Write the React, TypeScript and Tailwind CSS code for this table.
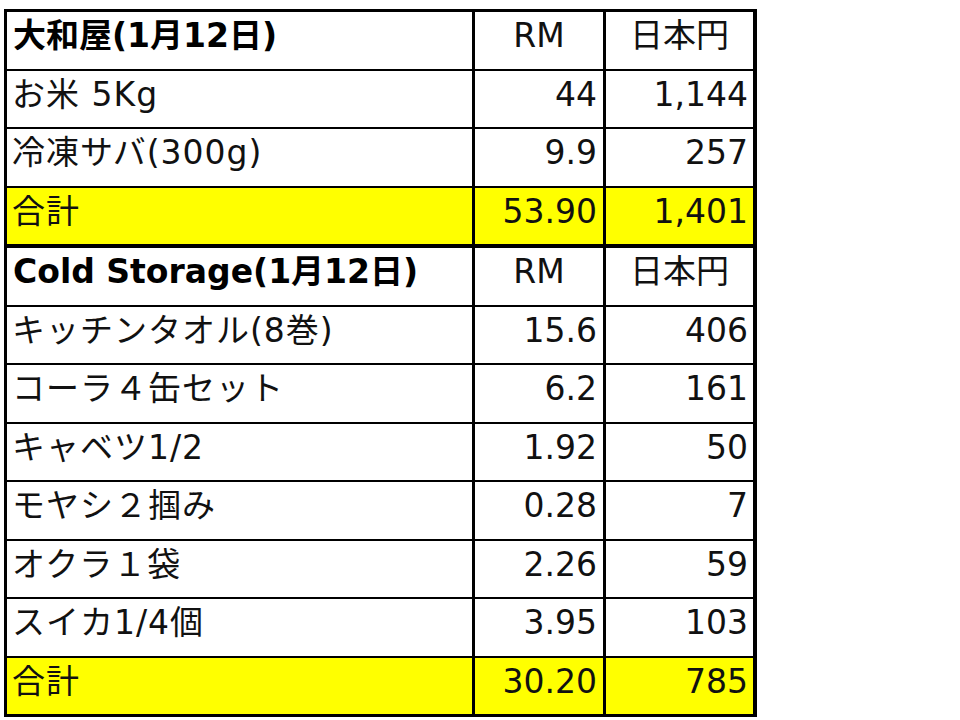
const FONT = { fontFamily: '"DejaVu Sans", "Noto Sans CJK JP", sans-serif' }

type Row = { label: string; rm: string; yen: string; kind?: 'head' | 'total' }

const rows: Row[] = [
  { label: '大和屋(1月12日)', rm: 'RM', yen: '日本円', kind: 'head' },
  { label: 'お米 5Kg', rm: '44', yen: '1,144' },
  { label: '冷凍サバ(300g)', rm: '9.9', yen: '257' },
  { label: '合計', rm: '53.90', yen: '1,401', kind: 'total' },
  { label: 'Cold Storage(1月12日)', rm: 'RM', yen: '日本円', kind: 'head' },
  { label: 'キッチンタオル(8巻)', rm: '15.6', yen: '406' },
  { label: 'コーラ４缶セット', rm: '6.2', yen: '161' },
  { label: 'キャベツ1/2', rm: '1.92', yen: '50' },
  { label: 'モヤシ２掴み', rm: '0.28', yen: '7' },
  { label: 'オクラ１袋', rm: '2.26', yen: '59' },
  { label: 'スイカ1/4個', rm: '3.95', yen: '103' },
  { label: '合計', rm: '30.20', yen: '785', kind: 'total' },
]

export default function App() {
  return (
    <div className="min-h-screen bg-white pl-[4px] pt-[9px] text-[#111]" style={FONT}>
      <div className="inline-grid grid-cols-[465px_128px_147px] gap-x-[3px] gap-y-[2px] bg-black pt-[3px] pl-[3px] pr-[4px] pb-[3px]">
        {rows.map((r, i) => {
          const bg = r.kind === 'total' ? 'bg-[#ffff00]' : 'bg-white'
          const extra = r.kind === 'total' && i === 3 ? 'border-b-2 border-black h-[58.5px]' : 'h-[56.5px]'
          if (r.kind === 'head') {
            return [
              <div key={i + 'a'} className={`${bg} ${extra} flex items-center pb-[9px] pl-[6px] text-[33px] font-bold leading-none whitespace-nowrap text-black`}>
                {r.label}
              </div>,
              <div key={i + 'b'} className={`${bg} ${extra} flex items-center justify-center pb-[9px] text-[33px] leading-none`}>
                {r.rm}
              </div>,
              <div key={i + 'c'} className={`${bg} ${extra} flex items-center justify-center pb-[9px] text-[33px] leading-none`}>
                {r.yen}
              </div>,
            ]
          }
          return [
            <div key={i + 'a'} className={`${bg} ${extra} flex items-center pb-[9px] pl-[5px] text-[33px] leading-none tracking-[1px] whitespace-nowrap`}>
              {r.label}
            </div>,
            <div key={i + 'b'} className={`${bg} ${extra} flex items-center justify-end pb-[9px] pr-[6px] text-[33px] leading-none`}>
              {r.rm}
            </div>,
            <div key={i + 'c'} className={`${bg} ${extra} flex items-center justify-end pb-[9px] pr-[5px] text-[33px] leading-none`}>
              {r.yen}
            </div>,
          ]
        })}
      </div>
    </div>
  )
}
